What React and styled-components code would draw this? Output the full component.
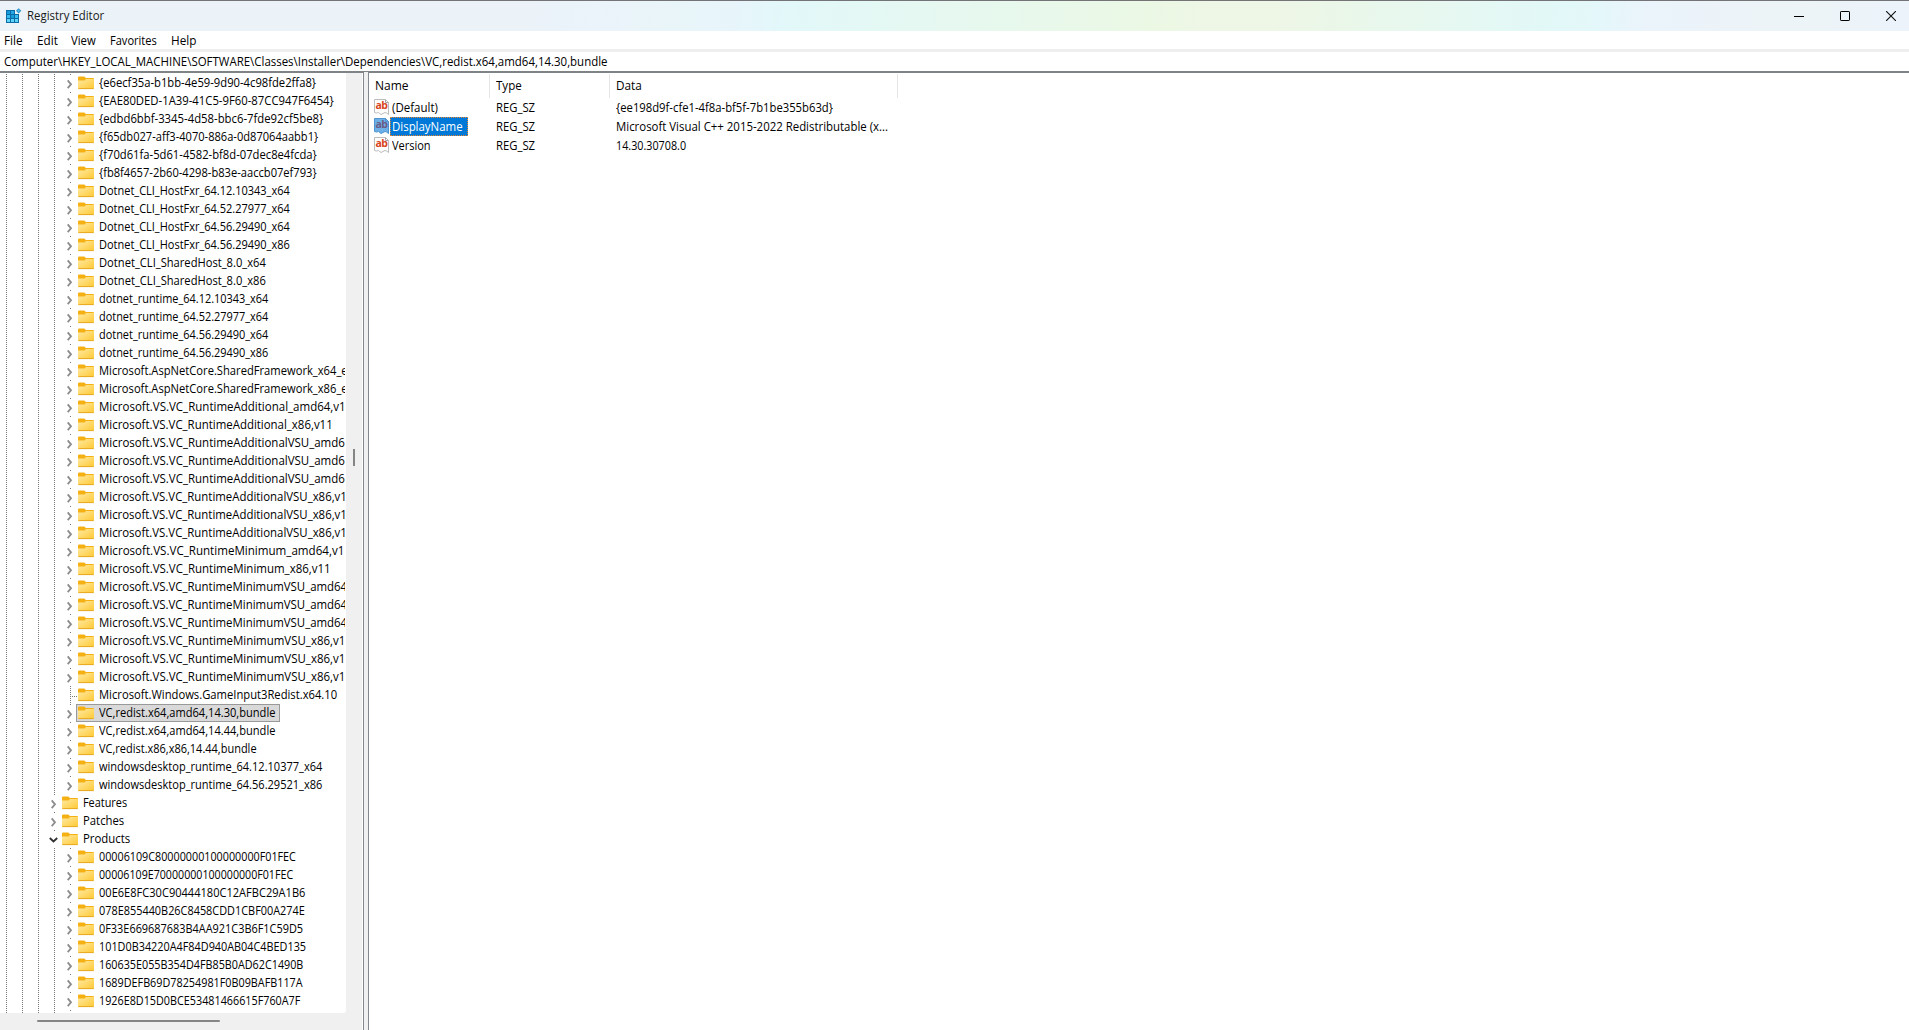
import React, { useLayoutEffect, useRef, useState } from 'react';
import styled, { createGlobalStyle } from 'styled-components';

const GlobalStyle = createGlobalStyle`
  * { box-sizing: border-box; }
  html, body { margin: 0; padding: 0; overflow: hidden; background: #fff; }
  body {
    font-family: "Open Sans", "Noto Sans", sans-serif;
    font-size: 12px;
    color: #000;
  }
`;

const Window = styled.div`
  display: flex;
  flex-direction: column;
  width: 1909px;
  height: 1030px;
  overflow: hidden;
  background: #fff;
`;

const TitleBar = styled.header`
  display: flex;
  align-items: center;
  flex: none;
  height: 31px;
  padding-left: 6px;
  border-top: 1px solid #737378;
  background: linear-gradient(
    95deg,
    #ebf3f8 0%, #ebf3f8 26%, #ebf3fb 31.3%, #e9f5f8 34.6%, #e7f5fb 38.5%, #e2f8f9 41.4%,
    #e5f8f2 47.7%, #e9f8e8 56.9%, #ebf8e4 60.2%, #eef6e5 63%, #eef6e6 66.8%, #eaf7e8 69.7%,
    #e7f8f0 74.9%, #e2f8f7 80.8%, #e4f7fa 83.8%, #ebf3fb 86.4%, #ecf4f7 94.3%, #ecf3fb 100%
  );
`;

const Title = styled.div`
  flex: 1;
  padding-left: 5px;
  color: #1a1a1a;
`;

const CaptionButtons = styled.div`
  display: flex;
  margin-right: -5px;
`;

const CaptionButton = styled.button`
  display: flex;
  align-items: center;
  justify-content: center;
  width: 46px;
  height: 30px;
  margin: 0;
  padding: 0;
  border: 0;
  background: transparent;
`;

const MenuBar = styled.nav`
  display: flex;
  align-items: flex-end;
  flex: none;
  height: 18px;
  padding-left: 4px;
  gap: 14px;
`;

const AddressBar = styled.div`
  display: flex;
  align-items: center;
  flex: none;
  height: 24px;
  padding-left: 4px;
  border-top: 3px solid #eeeeee;
  border-bottom: 2px solid #7f8386;
`;

const Body = styled.main`
  display: flex;
  flex: 1;
  min-height: 0;
`;

const TreePane = styled.section`
  display: grid;
  grid-template-columns: 346px 16px;
  grid-template-rows: 940px 17px;
  width: 363px;
  flex: none;
  background: linear-gradient(90deg, #f0f0f0 362px, #fff 362px);
`;

const TreeView = styled.div`
  padding-top: 1px;
  overflow: hidden;
  background: #fff;
  border-bottom-right-radius: 3px;
`;

const TreeRow = styled.div`
  display: flex;
  align-items: stretch;
  width: 345px;
  height: 18px;
  padding-left: 6px;
  overflow: hidden;
`;

const Guide = styled.span`
  flex: none;
  width: 16px;
  background: repeating-linear-gradient(180deg, #777 0 1px, transparent 1px 2px) 0 0 / 1px 100% no-repeat;
`;

const Expander = styled.svg`
  flex: none;
  width: 8px;
  height: 18px;
  overflow: visible;
`;

const NodeBody = styled.div`
  display: flex;
  align-items: center;
  flex: none;
  height: 18px;
  margin-left: -2px;
  padding: 0 3px 0 1px;
  border: 1px solid ${(p) => (p.$selected ? '#999' : 'transparent')};
  background: ${(p) => (p.$selected ? '#d9d9d9' : 'transparent')};
  gap: 5px;
`;

const VScroll = styled.div`
  padding: 376px 0 0 7px;
`;

const VThumb = styled.div`
  width: 2px;
  height: 17px;
  background: #858585;
`;

const HScroll = styled.div`
  padding: 7px 0 0 37px;
`;

const HThumb = styled.div`
  width: 183px;
  height: 2px;
  border-radius: 1px;
  background: #858585;
`;

const Splitter = styled.div`
  flex: none;
  width: 6px;
  margin-top: -1px;
  border: solid #828790;
  border-width: 0 1px;
  background: #f0f0f0;
`;

const ListPane = styled.section`
  flex: 1;
  padding-top: 1px;
`;

const HeaderRow = styled.div`
  display: grid;
  grid-template-columns: 121px 120px 288px;
  height: 24px;
`;

const HeaderCell = styled.div`
  display: flex;
  align-items: center;
  padding-left: 6px;
  border-right: 1px solid #e5e5e5;
`;

const ValueRow = styled.div`
  display: grid;
  grid-template-columns: 121px 120px 288px;
  height: 19px;
`;

const ValueCell = styled.div`
  display: flex;
  align-items: center;
  padding-left: ${(p) => (p.$first ? 5 : 6)}px;
`;

const ValueName = styled.div`
  display: flex;
  align-items: center;
  height: 19px;
  margin-left: 1px;
  padding: 0 4px 0 1px;
  border: 1px dotted ${(p) => (p.$selected ? '#e8842c' : 'transparent')};
  background: ${(p) => (p.$selected ? '#0078d7' : 'transparent')};
  color: ${(p) => (p.$selected ? '#fff' : '#000')};
`;

const TextBox = styled.span`
  display: block;
  flex: none;
  line-height: 16px;
  white-space: pre;
`;

const TextRun = styled.span`
  display: inline-block;
  transform-origin: 0 50%;
`;

/* Text condensed horizontally so that it occupies exactly the given width. */
function Label({ width, children }) {
  const run = useRef(null);
  const [scale, setScale] = useState(1);
  useLayoutEffect(() => {
    setScale(width / run.current.offsetWidth);
  }, [width, children]);
  return (
    <TextBox style={{ width }}>
      <TextRun ref={run} style={{ transform: `scaleX(${scale})` }}>{children}</TextRun>
    </TextBox>
  );
}

function RegistryIcon() {
  return (
    <svg width="16" height="16" viewBox="0 0 16 16">
      <path d="M0 2h9v4h4v9H0z" fill="#0d6ca6" />
      <path d="M1 3h3v3H1zM5 3h3v3H5z" fill="#25a9e6" />
      <path d="M1 7h3v3H1zM5 7h3v3H5zM9 7h3v3H9z" fill="#37bdf0" />
      <path d="M1 11h3v3H1zM5 11h3v3H5zM9 11h3v3H9z" fill="#5fd4fa" />
      <path d="M5 7h3v3H5zM1 3h3v3H1z" fill="#149bdc" />
      <path d="M12.6.2l2.7 2.6-2.7 2.7L10 2.8z" fill="#2b8fc4" />
      <path d="M12.6 1.5l1.3 1.3-1.3 1.3-1.3-1.3z" fill="#54c8f2" />
    </svg>
  );
}

function FolderIcon() {
  return (
    <svg width="16" height="14" viewBox="0 0 16 14">
      <defs>
        <linearGradient id="folder" x1="0" y1="0" x2="1" y2="1">
          <stop offset="0" stopColor="#ffe9a2" />
          <stop offset="1" stopColor="#ffc933" />
        </linearGradient>
      </defs>
      <path d="M0 1.4Q0 .5 1 .5H6.2L8 2H15Q16 2 16 3V6H0z" fill="#f5b014" />
      <path d="M0 4.6H6.6L8 3H16V12Q16 13 15 13H1Q0 13 0 12z" fill="url(#folder)" />
      <path d="M.4 12.6H15.6" stroke="#e8a820" strokeWidth="1" />
    </svg>
  );
}

const StringGlyph = styled.span`
  display: grid;
  flex: none;
  width: 15px;
  height: 17px;
  > * { grid-area: 1 / 1; }
`;

const StringLetters = styled.b`
  padding-left: 1.5px;
  font: 700 10.5px/13px "Open Sans", sans-serif;
  letter-spacing: -0.7px;
  color: ${(p) => (p.$selected ? '#6b5b86' : '#d9431d')};
`;

function StringIcon({ selected }) {
  return (
    <StringGlyph>
      <svg width="15" height="17" viewBox="0 0 15 17">
        <path
          d="M.5 .5H11.5L14.5 3.5V15.5L12.5 14L11 13.5L9 14.5L7 15.5L4.5 13.5L2.5 14L.5 13.5z"
          fill={selected ? '#6db0e8' : '#fff'}
          stroke={selected ? '#4d94d0' : '#bcbcbc'}
        />
        <path d="M11.5 .5V3.5H14.5" fill="none" stroke={selected ? '#4d94d0' : '#a8a8a8'} />
      </svg>
      <StringLetters $selected={selected}>ab</StringLetters>
    </StringGlyph>
  );
}

const MENU = [['File', 18.5], ['Edit', 20.5], ['View', 24.5], ['Favorites', 47], ['Help', 25.5]];

const repeat = (n, text, width) => Array.from({ length: n }, () => [text, width]);

const DEPENDENCIES = [
  ['{e6ecf35a-b1bb-4e59-9d90-4c98fde2ffa8}', 217],
  ['{EAE80DED-1A39-41C5-9F60-87CC947F6454}', 234.5],
  ['{edbd6bbf-3345-4d58-bbc6-7fde92cf5be8}', 224.5],
  ['{f65db027-aff3-4070-886a-0d87064aabb1}', 219],
  ['{f70d61fa-5d61-4582-bf8d-07dec8e4fcda}', 218],
  ['{fb8f4657-2b60-4298-b83e-aaccb07ef793}', 218],
  ['Dotnet_CLI_HostFxr_64.12.10343_x64', 190.5],
  ['Dotnet_CLI_HostFxr_64.52.27977_x64', 190.5],
  ['Dotnet_CLI_HostFxr_64.56.29490_x64', 190.5],
  ['Dotnet_CLI_HostFxr_64.56.29490_x86', 190.5],
  ['Dotnet_CLI_SharedHost_8.0_x64', 166.5],
  ['Dotnet_CLI_SharedHost_8.0_x86', 166.5],
  ['dotnet_runtime_64.12.10343_x64', 169.5],
  ['dotnet_runtime_64.52.27977_x64', 169.5],
  ['dotnet_runtime_64.56.29490_x64', 169.5],
  ['dotnet_runtime_64.56.29490_x86', 169.5],
  ['Microsoft.AspNetCore.SharedFramework_x64_e', 249],
  ['Microsoft.AspNetCore.SharedFramework_x86_e', 249],
  ['Microsoft.VS.VC_RuntimeAdditional_amd64,v1', 246.5],
  ['Microsoft.VS.VC_RuntimeAdditional_x86,v11', 233.5],
  ...repeat(3, 'Microsoft.VS.VC_RuntimeAdditionalVSU_amd6', 246),
  ...repeat(3, 'Microsoft.VS.VC_RuntimeAdditionalVSU_x86,v1', 248),
  ['Microsoft.VS.VC_RuntimeMinimum_amd64,v11', 252],
  ['Microsoft.VS.VC_RuntimeMinimum_x86,v11', 231.5],
  ...repeat(3, 'Microsoft.VS.VC_RuntimeMinimumVSU_amd64', 248.5),
  ...repeat(3, 'Microsoft.VS.VC_RuntimeMinimumVSU_x86,v1', 246.5),
  ['Microsoft.Windows.GameInput3Redist.x64.10', 238.5, { leaf: true }],
  ['VC,redist.x64,amd64,14.30,bundle', 176.5, { selected: true }],
  ['VC,redist.x64,amd64,14.44,bundle', 176.5],
  ['VC,redist.x86,x86,14.44,bundle', 157.5],
  ['windowsdesktop_runtime_64.12.10377_x64', 223.5],
  ['windowsdesktop_runtime_64.56.29521_x86', 223.5],
];

const SIBLINGS = [['Features', 44.5], ['Patches', 41.5], ['Products', 47.5, { open: true }]];

const PRODUCTS = [
  ['00006109C80000000100000000F01FEC', 196.5],
  ['00006109E70000000100000000F01FEC', 194.5],
  ['00E6E8FC30C90444180C12AFBC29A1B6', 206.5],
  ['078E855440B26C8458CDD1CBF00A274E', 206],
  ['0F33E669687683B4AA921C3B6F1C59D5', 204.5],
  ['101D0B34220A4F84D940AB04C4BED135', 207],
  ['160635E055B354D4FB85B0AD62C1490B', 204],
  ['1689DEFB69D78254981F0B09BAFB117A', 203.5],
  ['1926E8D15D0BCE53481466615F760A7F', 201.5],
];

const VALUES = [
  ['(Default)', 46, '{ee198d9f-cfe1-4f8a-bf5f-7b1be355b63d}', 217],
  ['DisplayName', 70.5, 'Microsoft Visual C++ 2015-2022 Redistributable (x...', 272],
  ['Version', 38.5, '14.30.30708.0', 70],
];

function TreeNode({ node, depth }) {
  const [text, width, { leaf, selected, open } = {}] = node;
  return (
    <TreeRow>
      {Array.from({ length: depth }, (_, i) => <Guide key={i} />)}
      <Expander viewBox="0 0 8 18">
        {leaf ? (
          <path d="M.5 0V18M2 10.5H8" stroke="#777" strokeDasharray="1 1" />
        ) : (
          <>
            <path d="M0 0h1v1H0z" fill="#777" />
            {open ? (
              <path d="M-4.2 8L-.5 11.5L3.2 8" fill="none" stroke="#303030" strokeWidth="1.8" />
            ) : (
              <path d="M-2.3 6.4L1 10.3L-2.3 14.2" fill="none" stroke="#8c8c8c" strokeWidth="1.8" />
            )}
          </>
        )}
      </Expander>
      <NodeBody $selected={selected}>
        <FolderIcon />
        <Label width={width}>{text}</Label>
      </NodeBody>
    </TreeRow>
  );
}

export default function App() {
  return (
    <Window>
      <GlobalStyle />
      <TitleBar>
        <RegistryIcon />
        <Title><Label width={77}>Registry Editor</Label></Title>
        <CaptionButtons>
          <CaptionButton aria-label="Minimize">
            <svg width="10" height="10"><path d="M0 5.5H10" stroke="#000" /></svg>
          </CaptionButton>
          <CaptionButton aria-label="Maximize">
            <svg width="10" height="10"><rect x=".5" y=".5" width="9" height="9" rx=".6" fill="none" stroke="#000" /></svg>
          </CaptionButton>
          <CaptionButton aria-label="Close">
            <svg width="10" height="10"><path d="M0 0L10 10M10 0L0 10" stroke="#111" strokeWidth="1.1" /></svg>
          </CaptionButton>
        </CaptionButtons>
      </TitleBar>
      <MenuBar>
        {MENU.map(([text, width]) => <Label key={text} width={width}>{text}</Label>)}
      </MenuBar>
      <AddressBar>
        <Label width={603.5}>
          {'Computer\\HKEY_LOCAL_MACHINE\\SOFTWARE\\Classes\\Installer\\Dependencies\\VC,redist.x64,amd64,14.30,bundle'}
        </Label>
      </AddressBar>
      <Body>
        <TreePane>
          <TreeView>
            {DEPENDENCIES.map((node, i) => <TreeNode key={i} node={node} depth={4} />)}
            {SIBLINGS.map((node, i) => <TreeNode key={i} node={node} depth={3} />)}
            {PRODUCTS.map((node, i) => <TreeNode key={i} node={node} depth={4} />)}
            <TreeRow>
              <Guide /><Guide /><Guide /><Guide />
              <Expander viewBox="0 0 8 18"><path d="M0 0h1v1H0z" fill="#777" /></Expander>
            </TreeRow>
          </TreeView>
          <VScroll><VThumb /></VScroll>
          <HScroll><HThumb /></HScroll>
        </TreePane>
        <Splitter />
        <ListPane>
          <HeaderRow>
            <HeaderCell><Label width={34}>Name</Label></HeaderCell>
            <HeaderCell><Label width={26}>Type</Label></HeaderCell>
            <HeaderCell><Label width={25.5}>Data</Label></HeaderCell>
          </HeaderRow>
          {VALUES.map(([name, nameWidth, data, dataWidth], i) => (
            <ValueRow key={name}>
              <ValueCell $first>
                <StringIcon selected={i === 1} />
                <ValueName $selected={i === 1}><Label width={nameWidth}>{name}</Label></ValueName>
              </ValueCell>
              <ValueCell><Label width={39.5}>REG_SZ</Label></ValueCell>
              <ValueCell><Label width={dataWidth}>{data}</Label></ValueCell>
            </ValueRow>
          ))}
        </ListPane>
      </Body>
    </Window>
  );
}
